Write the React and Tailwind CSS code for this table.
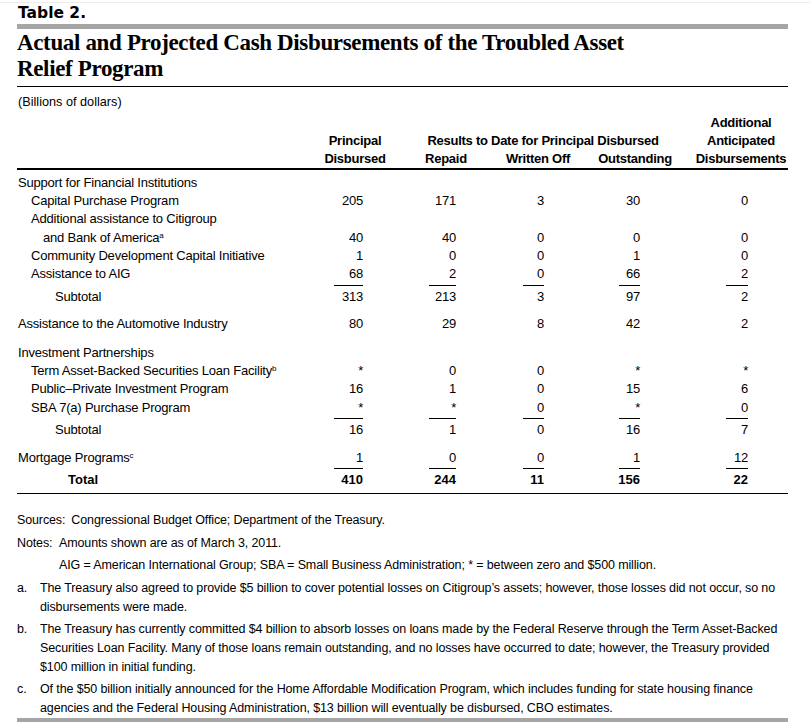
const COLS = "grid grid-cols-[301px_74px_108px_76px_118px_94px]";
const PR = ["pr-[29px]", "pr-[44px]", "pr-[32px]", "pr-[54px]", "pr-[40px]"];
const RW = ["w-[29px]", "w-[27px]", "w-[21px]", "w-[21px]", "w-[22px]"];

function Row({ label, indent = "pl-[1px]", vals = [], bold = false, className = "" }) {
  return (
    <div className={`${COLS} h-[18.4px] leading-[18.4px] ${bold ? "font-bold text-[13px]" : "text-[13px] tracking-[-0.015em]"} ${className}`}>
      <div className={`${indent} whitespace-nowrap`}>{label}</div>
      {[0, 1, 2, 3, 4].map((i) => (
        <div key={i} className={`flex justify-end ${PR[i]}`}>
          {vals[i] ?? ""}
        </div>
      ))}
    </div>
  );
}

function Rule() {
  return (
    <div className={`${COLS} h-[4px]`}>
      <div />
      {[0, 1, 2, 3, 4].map((i) => (
        <div key={i} className={`flex justify-end ${PR[i]}`}>
          <div className={`mt-px h-px bg-black ${RW[i]}`} />
        </div>
      ))}
    </div>
  );
}

function Note({ tag, children, className = "" }) {
  return (
    <div className={`flex ${className}`}>
      <div className="w-[23px] shrink-0">{tag}</div>
      <div className="whitespace-nowrap">{children}</div>
    </div>
  );
}

export default function App() {
  return (
    <div className="w-[810px] h-[727px] bg-white overflow-hidden font-['Liberation_Sans',Arial,sans-serif] text-black">
      <div className="mt-[2px] h-px bg-[#ededed]" />
      <div className="ml-[17px] w-[771px]">
        <div className="mt-px h-[18px] leading-[18px] text-[15.5px] font-bold font-['DejaVu_Sans',sans-serif] pl-px">
          Table 2.
        </div>
        <div className="mt-[2px] h-[5px] bg-[#a6a6a6]" />
        <h1 className="mt-px font-['Liberation_Serif',serif] font-bold text-[23px] leading-[26px] tracking-[-0.35px]">
          Actual and Projected Cash Disbursements of the Troubled Asset
          <br />
          Relief Program
        </h1>
        <div className="mt-[4px] h-px bg-black" />
        <div className="mt-[5.5px] text-[12.7px] leading-[18px] pl-px">(Billions of dollars)</div>

        <div className={`${COLS} mt-[3px] grid-rows-[18px_18px_18px] text-[13px] font-bold leading-[18px] tracking-[-0.02em]`}>
          <div className="col-start-2 row-start-2 row-span-2 text-center">
            Principal
            <br />
            Disbursed
          </div>
          <div className="col-start-3 col-span-3 row-start-2 flex flex-col">
            <div className="text-center">Results to Date for Principal Disbursed</div>
            <div className="mx-[11px] h-[2px] bg-black" />
          </div>
          <div className="col-start-3 row-start-3 text-center">Repaid</div>
          <div className="col-start-4 row-start-3 text-center">Written Off</div>
          <div className="col-start-5 row-start-3 text-center">Outstanding</div>
          <div className="col-start-6 row-start-1 row-span-3 text-center">
            Additional
            <br />
            Anticipated
            <br />
            Disbursements
          </div>
        </div>
        <div className="h-[2px] bg-black" />

        <div className="mt-[4px]">
          <Row label="Support for Financial Institutions" />
          <Row label="Capital Purchase Program" indent="pl-[14px]" vals={["205", "171", "3", "30", "0"]} />
          <Row label="Additional assistance to Citigroup" indent="pl-[14px]" />
          <Row
            label={
              <>
                and Bank of America<sup className="text-[8px]">a</sup>
              </>
            }
            indent="pl-[26px]"
            vals={["40", "40", "0", "0", "0"]}
          />
          <Row label="Community Development Capital Initiative" indent="pl-[14px]" vals={["1", "0", "0", "1", "0"]} />
          <Row label="Assistance to AIG" indent="pl-[14px]" vals={["68", "2", "0", "66", "2"]} />
          <Rule />
          <Row label="Subtotal" indent="pl-[38px]" vals={["313", "213", "3", "97", "2"]} />
          <Row label="Assistance to the Automotive Industry" className="mt-[9px]" vals={["80", "29", "8", "42", "2"]} />
          <Row label="Investment Partnerships" className="mt-[10px]" />
          <Row
            label={
              <>
                Term Asset-Backed Securities Loan Facility<sup className="text-[8px]">b</sup>
              </>
            }
            indent="pl-[14px]"
            vals={["*", "0", "0", "*", "*"]}
          />
          <Row label="Public–Private Investment Program" indent="pl-[14px]" vals={["16", "1", "0", "15", "6"]} />
          <Row label="SBA 7(a) Purchase Program" indent="pl-[14px]" vals={["*", "*", "0", "*", "0"]} />
          <Rule />
          <Row label="Subtotal" indent="pl-[38px]" vals={["16", "1", "0", "16", "7"]} />
          <Row
            label={
              <>
                Mortgage Programs<sup className="text-[8px]">c</sup>
              </>
            }
            className="mt-[9px]"
            vals={["1", "0", "0", "1", "12"]}
          />
          <Rule />
          <Row label="Total" indent="pl-[51px]" bold vals={["410", "244", "11", "156", "22"]} />
        </div>
        <div className="mt-[4px] h-px bg-black" />

        <div className="mt-[16.5px] text-[12.5px] leading-[18.7px] tracking-[-0.01em]">
          <div className="whitespace-nowrap">
            Sources:<span className="ml-[6px]">Congressional Budget Office; Department of the Treasury.</span>
          </div>
          <div className="mt-[4px] flex">
            <div className="w-[42px] shrink-0">Notes:</div>
            <div>
              <div>Amounts shown are as of March 3, 2011.</div>
              <div className="mt-[4px] whitespace-nowrap">
                AIG = American International Group; SBA = Small Business Administration; * = between zero and $500 million.
              </div>
            </div>
          </div>
          <Note tag="a." className="mt-[4px]">
            The Treasury also agreed to provide $5 billion to cover potential losses on Citigroup’s assets; however, those losses did not occur, so no
            <br />
            disbursements were made.
          </Note>
          <Note tag="b." className="mt-[4px]">
            The Treasury has currently committed $4 billion to absorb losses on loans made by the Federal Reserve through the Term Asset-Backed
            <br />
            Securities Loan Facility. Many of those loans remain outstanding, and no losses have occurred to date; however, the Treasury provided
            <br />
            $100 million in initial funding.
          </Note>
          <Note tag="c." className="mt-[4px]">
            Of the $50 billion initially announced for the Home Affordable Modification Program, which includes funding for state housing finance
            <br />
            agencies and the Federal Housing Administration, $13 billion will eventually be disbursed, CBO estimates.
          </Note>
        </div>
        <div className="h-[4px] bg-[#a6a6a6]" />
      </div>
    </div>
  );
}
